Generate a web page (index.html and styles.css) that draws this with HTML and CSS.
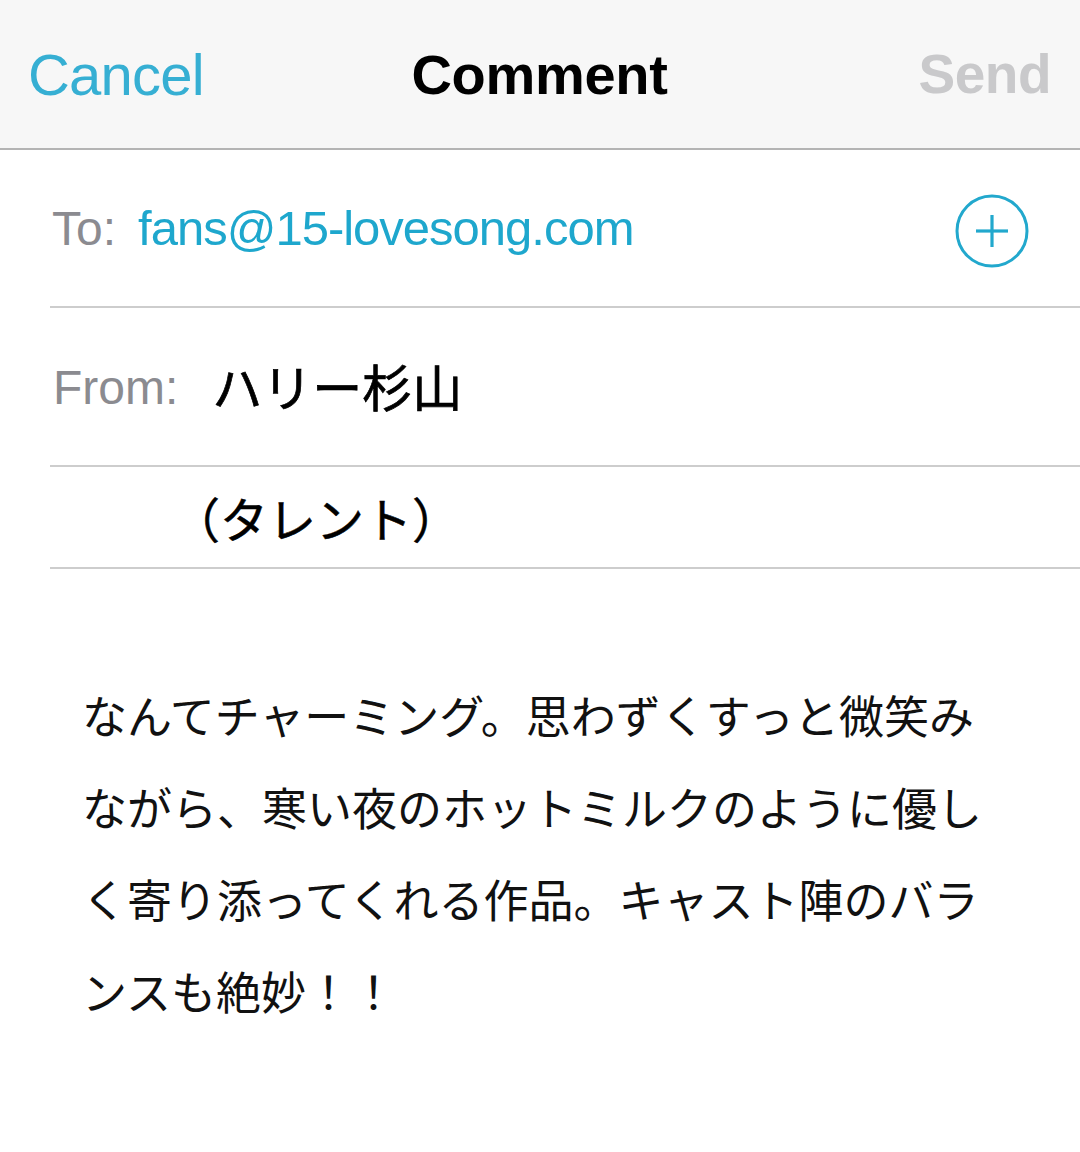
FILE: index.html
```html
<!DOCTYPE html>
<html lang="ja">
<head>
<meta charset="utf-8">
<title>Comment</title>
<link rel="stylesheet" href="styles.css">
</head>
<body>
<div class="screen">
  <header class="navbar">
    <span class="nav-cancel">Cancel</span>
    <span class="nav-title">Comment</span>
    <span class="nav-send">Send</span>
  </header>
  <div class="field field-to">
    <span class="label">To:</span>
    <span class="email">fans@15-lovesong.com</span>
    <svg class="add-icon" width="76" height="76" viewBox="0 0 76 76" aria-hidden="true">
      <circle cx="38" cy="38" r="35" fill="none" stroke="#22a8cd" stroke-width="3"/>
      <line x1="22" y1="38" x2="54" y2="38" stroke="#22a8cd" stroke-width="3.2"/>
      <line x1="38" y1="22" x2="38" y2="54" stroke="#22a8cd" stroke-width="3.2"/>
    </svg>
  </div>
  <div class="field field-from">
    <span class="label">From:</span>
    <span class="name">ハリー杉山</span>
  </div>
  <div class="field field-role">
    <span class="role">（タレント）</span>
  </div>
  <div class="body">
    <p class="message">なんてチャーミング。思わずくすっと微笑みながら、寒い夜のホットミルクのように優しく寄り添ってくれる作品。キャスト陣のバランスも絶妙！！</p>
  </div>
</div>
</body>
</html>
```

FILE: styles.css
```css
* { box-sizing: border-box; }
html, body {
  margin: 0;
  padding: 0;
  background: #ffffff;
}
body {
  font-family: "Liberation Sans", Arial, "Noto Sans CJK JP", sans-serif;
  width: 1080px;
  height: 1152px;
  overflow: hidden;
}
.screen {
  display: flex;
  flex-direction: column;
}
.navbar {
  height: 150px;
  background: #f7f7f7;
  border-bottom: 2px solid #b4b4b4;
  display: grid;
  grid-template-columns: 1fr auto 1fr;
  align-items: center;
  padding: 0 29px 0 28px;
}
.nav-cancel {
  font-size: 58px;
  letter-spacing: -0.8px;
  color: #36afd3;
  justify-self: start;
}
.nav-title {
  font-size: 56px;
  font-weight: 700;
  color: #000;
  letter-spacing: -0.3px;
}
.nav-send {
  font-size: 55px;
  font-weight: 700;
  letter-spacing: -0.5px;
  color: #c9c9cb;
  justify-self: end;
}
.field {
  margin-left: 50px;
  border-bottom: 2px solid #cdcdcd;
  display: flex;
  align-items: center;
}
.field-to {
  height: 158px;
  padding: 0 50px 0 2px;
}
.field-from {
  height: 159px;
  padding-left: 3px;
  padding-top: 2px;
}
.field-role {
  height: 102px;
  padding-left: 122px;
}
.label {
  font-size: 48px;
  color: #8b8b90;
  letter-spacing: 0px;
}
.email {
  font-size: 49px;
  color: #1ea7cd;
  letter-spacing: -1px;
  margin-left: 22px;
  flex: 1;
}
.add-icon {
  display: block;
  margin-top: 6px;
}
.name {
  font-family: "Noto Sans CJK JP", sans-serif;
  font-size: 50px;
  color: #000;
  margin-left: 34px;
  position: relative;
  top: -3px;
  -webkit-text-stroke: 0.7px #000;
}
.role {
  font-family: "Noto Sans CJK JP", sans-serif;
  font-size: 48px;
  color: #000;
  -webkit-text-stroke: 0.5px #000;
}
.body {
  padding: 100px 0 0 82px;
}
.message {
  margin: 0;
  width: 910px;
  font-family: "Noto Sans CJK JP", sans-serif;
  font-size: 45px;
  line-height: 92px;
  color: #111;
}
```
